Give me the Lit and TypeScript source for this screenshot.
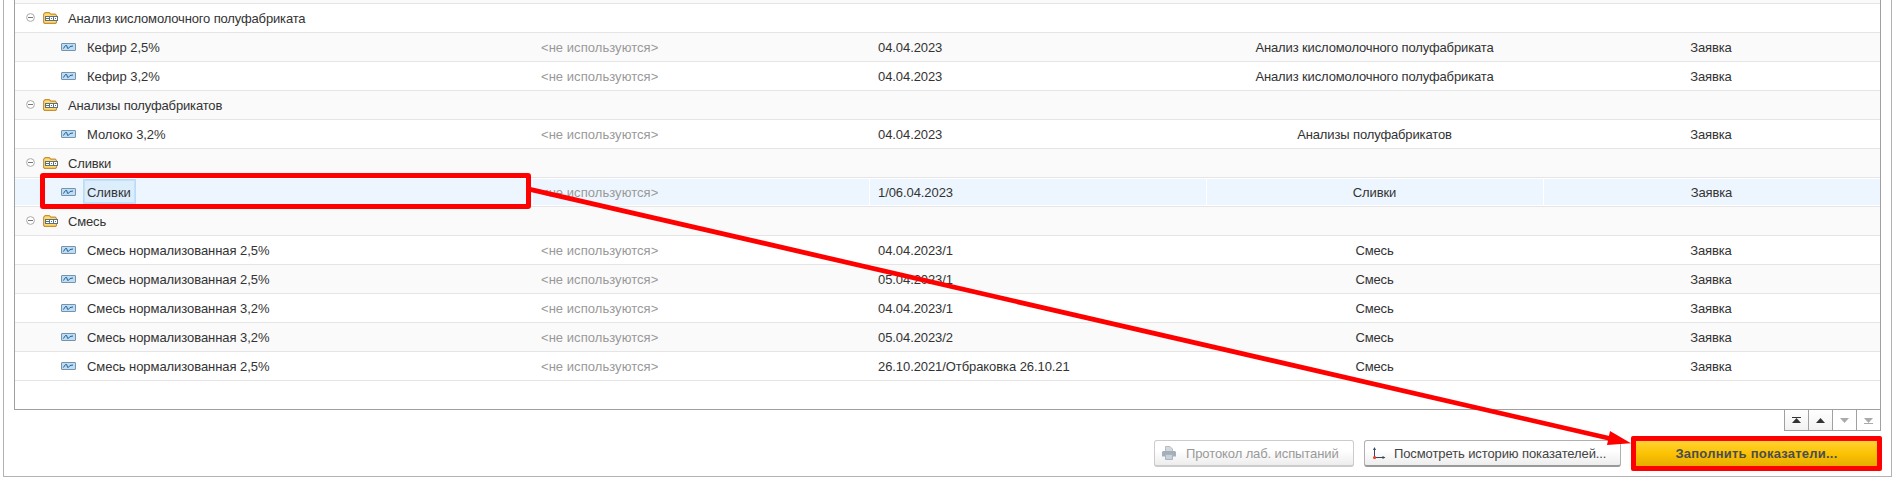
import { LitElement, html, svg, css, nothing } from "lit";
import { customElement } from "lit/decorators.js";
import { classMap } from "lit/directives/class-map.js";

interface Row {
  name: string;
  group?: boolean;
  selected?: boolean;
  batch?: string;
  kind?: string;
}

const ROWS: Row[] = [
  { name: "Анализ кисломолочного полуфабриката", group: true },
  { name: "Кефир 2,5%", batch: "04.04.2023", kind: "Анализ кисломолочного полуфабриката" },
  { name: "Кефир 3,2%", batch: "04.04.2023", kind: "Анализ кисломолочного полуфабриката" },
  { name: "Анализы полуфабрикатов", group: true },
  { name: "Молоко 3,2%", batch: "04.04.2023", kind: "Анализы полуфабрикатов" },
  { name: "Сливки", group: true },
  { name: "Сливки", batch: "1/06.04.2023", kind: "Сливки", selected: true },
  { name: "Смесь", group: true },
  { name: "Смесь нормализованная 2,5%", batch: "04.04.2023/1", kind: "Смесь" },
  { name: "Смесь нормализованная 2,5%", batch: "05.04.2023/1", kind: "Смесь" },
  { name: "Смесь нормализованная 3,2%", batch: "04.04.2023/1", kind: "Смесь" },
  { name: "Смесь нормализованная 3,2%", batch: "05.04.2023/2", kind: "Смесь" },
  { name: "Смесь нормализованная 2,5%", batch: "26.10.2021/Отбраковка 26.10.21", kind: "Смесь" },
];

const minusIcon = html`<svg class="minus" width="9" height="9" viewBox="0 0 9 9">
  <circle cx="4.5" cy="4.5" r="3.9" fill="#fff" stroke="#aaa" />
  <path d="M2 4.5h5" stroke="#777" />
</svg>`;

const folderIcon = html`<svg class="folder" width="15" height="12" viewBox="0 0 15 12">
  <path d="M.6 10.400V2.200L2.200.6h4l1.700 1.500h4.300l1.300 1.300v7L12.500 11.400H1.600z" fill="#fbdc6c" stroke="#cb8d35" stroke-width="1.1" />
  <path d="M2 4h13v5H2z" fill="#5b7183" />
  <path d="M3 5h3v1H3zM3 7h3v1H3zM7 5h3v3H7zM11 5h3v3h-3z" fill="#fff" />
  <path d="M8 6h1v1H8zM12 6h1v1h-1z" fill="#5b7183" />
</svg>`;

const waveIcon = html`<svg class="wave" width="15" height="8" viewBox="0 0 15 8">
  <rect x=".5" y=".5" width="14" height="7" rx=".4" fill="#bddcf5" stroke="#7793ab" />
  <path d="M2.300 5.600 4.500 2.500 5.700 2.500 6.500 5.300 7.500 5.300 9 3.500 12 3" fill="none" stroke="#21608f" stroke-width="1" />
</svg>`;

const NAV = [
  { on: true, shape: svg`<path d="M0 .5h9" stroke="currentColor"/><path d="M0 6 4.500 1 9 6z" fill="currentColor"/>` },
  { on: true, shape: svg`<path d="M0 6 4.500 1 9 6z" fill="currentColor"/>` },
  { on: false, shape: svg`<path d="M0 1 4.500 6 9 1z" fill="currentColor"/>` },
  { on: false, shape: svg`<path d="M0 6.500h9" stroke="currentColor"/><path d="M0 1 4.500 6 9 1z" fill="currentColor"/>` },
];

@customElement("app-root")
export class AppRoot extends LitElement {
  static styles = css`
    :host {
      display: block;
      position: relative;
      height: 483px;
      overflow: hidden;
      background: #fff;
      color: #333;
      font: 13px/16px "Liberation Sans", Arial, sans-serif;
      white-space: nowrap;
    }
    .frame {
      box-sizing: border-box;
      height: 477px;
      margin: 0 1px 0 3px;
      padding: 0 10px;
      border: 1px solid #b3b3b3;
      border-top: 0;
    }
    .table {
      box-sizing: border-box;
      height: 410px;
      border: 1px solid #a0a0a0;
      border-top: 0;
    }
    .above { height: 3px; background: #fafafa; border-bottom: 1px solid #e5e5e5; }
    .row {
      box-sizing: border-box;
      height: 29px;
      display: grid;
      grid-template-columns: 518px repeat(3, 337px) 336px;
      align-items: center;
      border-bottom: 1px solid #e5e5e5;
    }
    .row.alt { background: #fafafa; }
    .row.selected { background: #fff; }
    .cell { height: 16px; line-height: 18px; padding-left: 8px; letter-spacing: -0.08px; }
    .cell.center { padding: 0 2px 0 0; text-align: center; letter-spacing: -0.13px; }
    .cell.muted { color: #999; letter-spacing: 0.05px; }
    .cell.name { display: flex; align-items: center; padding-left: 46px; line-height: 16px; letter-spacing: -0.06px; }
    .cell.name.group { padding-left: 11px; letter-spacing: -0.15px; }
    .selected .cell {
      box-sizing: border-box;
      height: 26px;
      padding-top: 5px;
      padding-bottom: 5px;
      margin-right: 1px;
      background: #edf6fe;
    }
    .selected .cell.center { padding-right: 1px; }
    .selected .cell:last-child { margin-right: 0; }
    .selected .cell.name { padding-top: 0; padding-bottom: 0; }
    .minus { margin-right: 8px; margin-top: -1px; }
    .folder { margin-right: 10px; }
    .wave { margin-right: 7px; }
    .label { padding: 0 4px; margin-top: 2px; }
    .group .label { padding: 0; }
    .selected .label {
      align-self: flex-start;
      margin-top: 0;
      padding: 5px 4px 2px 3px;
      border: 1px solid #b9dcf9;
      background: #dcedfc;
      outline: 1px solid #c4e1fa;
      outline-offset: -2px;
    }
    .nav { display: flex; justify-content: flex-end; margin-top: -1px; }
    .nav-item {
      box-sizing: border-box;
      width: 25px;
      height: 22px;
      margin-left: -1px;
      border: 1px solid #a0a0a0;
      display: grid;
      place-items: center;
      color: #aaa;
      background: #fff;
    }
    .nav-item.on { color: #333; background: linear-gradient(#fff, #f2f2f2); }
    .actions { display: flex; justify-content: flex-end; margin: 5px -1px 0 0; align-items: center; }
    .button {
      box-sizing: border-box;
      height: 27px;
      display: flex;
      align-items: center;
      border: 1px solid #b0b0b0;
      border-bottom: 2px solid #999;
      border-radius: 3px;
      background: linear-gradient(#fff 40%, #ededed);
      color: #444;
    }
    .button svg { flex: none; }
    .caption { margin-top: 2px; letter-spacing: -0.1px; }
    .protocol { width: 200px; padding-left: 7px; margin-right: 10px; color: #999; border-color: #ccc; }
    .history { width: 257px; padding-left: 8px; margin-right: 10px; }
    .print { margin-right: 10px; }
    .axes { margin-right: 8px; }
    .fill {
      box-sizing: border-box;
      width: 251px;
      height: 35px;
      border: 5px solid #f00;
      border-radius: 2px;
      background: linear-gradient(#ffd333, #fcc203 50%, #e6ad00);
      color: #4d4d4d;
      font-weight: bold;
      line-height: 25px;
      letter-spacing: 0.23px;
      text-align: center;
    }
    .marks { position: absolute; inset: 0; pointer-events: none; }
  `;

  private renderRow(row: Row, i: number) {
    return html`<div class=${classMap({ row: true, alt: i % 2 === 1, selected: !!row.selected })}>
      <div class=${classMap({ cell: true, name: true, group: !!row.group })}>
        ${row.group ? html`${minusIcon}${folderIcon}` : waveIcon}<span class="label">${row.name}</span>
      </div>
      ${row.group
        ? nothing
        : html`<div class="cell muted">&lt;не используются&gt;</div>
            <div class="cell">${row.batch}</div>
            <div class="cell center">${row.kind}</div>
            <div class="cell center">Заявка</div>`}
    </div>`;
  }

  render() {
    return html`
      <div class="frame">
        <div class="table">
          <div class="above"></div>
          ${ROWS.map((r, i) => this.renderRow(r, i))}
        </div>
        <div class="nav">
          ${NAV.map(
            (n) => html`<div class=${classMap({ "nav-item": true, on: n.on })}>
              <svg width="9" height="7" viewBox="0 0 9 7">${n.shape}</svg>
            </div>`
          )}
        </div>
        <div class="actions">
          <div class="button protocol">
            <svg class="print" width="14" height="14" viewBox="0 0 14 14">
              <path d="M3.500 5V.5H8L10.500 3V5" fill="#d3d8dc" stroke="#b5bec6" />
              <path d="M1 5h12l1 1v4.500H0V6z" fill="#a3afba" />
              <path d="M3.500 8.500h7v5h-7z" fill="#c9d0d6" stroke="#aab5bf" />
            </svg>
            <span class="caption">Протокол лаб. испытаний</span>
          </div>
          <div class="button history">
            <svg class="axes" width="13" height="13" viewBox="0 0 13 13">
              <path d="M1.500 2v9M1.500 10.500h9" stroke="#34495e" fill="none" />
              <path d="M0 3 1.500 0 3 3zM9.500 9 12.500 10.500 9.500 12z" fill="#34495e" />
              <circle cx="1.600" cy="10.500" r="1.600" fill="#f0392b" />
            </svg>
            <span class="caption">Посмотреть историю показателей...</span>
          </div>
          <div class="fill">Заполнить показатели...</div>
        </div>
      </div>
      <svg class="marks" width="1893" height="483" viewBox="0 0 1893 483">
        <rect x="42.500" y="175.500" width="486" height="31" rx=".5" fill="none" stroke="#f00" stroke-width="5" />
        <path d="M530 189.300 1610 438.500" stroke="#f00" stroke-width="4.800" />
        <path d="M1610 431 1631 443.300 1607 445z" fill="#f00" />
      </svg>
    `;
  }
}
